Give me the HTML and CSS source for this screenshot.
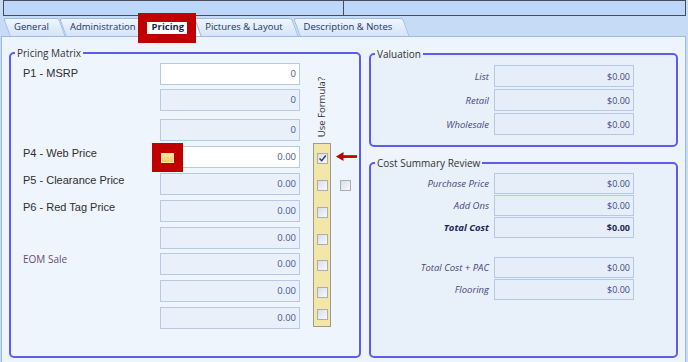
FILE: index.html
```html
<!DOCTYPE html>
<html>
<head>
<meta charset="utf-8">
<title>Pricing</title>
<link rel="stylesheet" href="styles.css">
</head>
<body>
<div class="topgrid"><div class="tg-cell"></div><div class="tg-cell"></div></div>
<div class="tabbar">
  <div class="tab">General</div>
  <div class="tab">Administration</div>
  <div class="tab active">Pricing<span class="hl-box"></span></div>
  <div class="tab">Pictures &amp; Layout</div>
  <div class="tab">Description &amp; Notes</div>
</div>
<div class="panel">
  <fieldset class="group matrix-group">
    <legend>Pricing Matrix</legend>
    <div class="matrix">
      <div class="lbl first r1">P1 - MSRP</div><div class="fld white r1">0</div>
      <div class="fld r2">0</div>
      <div class="fld r3">0</div>
      <div class="lbl r4">P4 - Web Price</div><div class="fld white r4">0.00</div>
      <div class="lbl r5">P5 - Clearance Price</div><div class="fld r5">0.00</div>
      <div class="lbl r6">P6 - Red Tag Price</div><div class="fld r6">0.00</div>
      <div class="fld r7">0.00</div>
      <div class="lbl eom r8">EOM Sale</div><div class="fld r8">0.00</div>
      <div class="fld r9">0.00</div>
      <div class="fld r10">0.00</div>

      <div class="uf">Use Formula?</div>
      <div class="strip"></div>
      <div class="cb checked r4"><svg width="9" height="9" viewBox="0 0 9 9"><path d="M1.5 4.5 L3.7 6.8 L7.8 1.5" fill="none" stroke="#2b3a78" stroke-width="1.4"/></svg></div>
      <div class="cb r5"></div>
      <div class="cb r6"></div>
      <div class="cb r7"></div>
      <div class="cb r8"></div>
      <div class="cb r9"></div>
      <div class="cb last r10"></div>
      <div class="cb extra r5"></div>

      <div class="arrow r4"><svg width="21" height="9" viewBox="0 0 21 9"><polygon points="0,4.5 7.5,0 7.5,9" fill="#c00000"/><rect x="7" y="3.2" width="14" height="2.7" fill="#c00000"/></svg></div>
      <div class="hl-icon r4"><span class="note"></span></div>
    </div>
  </fieldset>

  <div class="rightcol">
    <fieldset class="group side-group valuation">
      <legend>Valuation</legend>
      <div class="vrows">
        <div class="vlbl">List</div><div class="vfld">$0.00</div>
        <div class="vlbl">Retail</div><div class="vfld">$0.00</div>
        <div class="vlbl">Wholesale</div><div class="vfld">$0.00</div>
      </div>
    </fieldset>
    <fieldset class="group side-group cost">
      <legend>Cost Summary Review</legend>
      <div class="crows">
        <div class="vlbl">Purchase Price</div><div class="vfld">$0.00</div>
        <div class="vlbl">Add Ons</div><div class="vfld">$0.00</div>
        <div class="vlbl strong">Total Cost</div><div class="vfld strong">$0.00</div>
        <div class="spacer"></div>
        <div class="vlbl">Total Cost + PAC</div><div class="vfld">$0.00</div>
        <div class="vlbl">Flooring</div><div class="vfld">$0.00</div>
      </div>
    </fieldset>
  </div>
</div>
</body>
</html>
```
FILE: styles.css
```css
* { box-sizing: border-box; }
html, body { margin: 0; }
body {
  width: 688px;
  height: 362px;
  overflow: hidden;
  background: #c6dbf6;
  font-family: "Open Sans", "Noto Sans", sans-serif;
}

/* top grid remnant */
.topgrid {
  display: grid;
  grid-template-columns: 340px 1fr;
  height: 16px;
  margin: 0 2px 0 3px;
  border: 1px solid #4b4b55;
  background: #bdd7fa;
}
.tg-cell:first-child { border-right: 1px solid #4b4b55; }

/* tabs */
.tabbar {
  position: relative;
  z-index: 0;
  display: flex;
  height: 20px;
  padding: 2px 0 0 3px;
}
.tab {
  position: relative;
  height: 18px;
  line-height: 18px;
  padding: 0 10px 0 11px;
  font-size: 9.5px;
  color: #1b355f;
  white-space: nowrap;
}
.tab::before {
  content: "";
  position: absolute;
  inset: 0;
  z-index: -1;
  border: 1px solid #9fbce4;
  border-bottom: 0;
  border-radius: 3px 3px 0 0;
  background: linear-gradient(#eef5fd, #d5e4f7);
  transform: skewX(20deg);
  transform-origin: 0 0;
}
.tab.active {
  padding: 0 10px 0 6px;
  font-weight: 700;
  color: #15284e;
  background: #ffffff;
}
.tab.active::before { background: #ffffff; }
.hl-box {
  position: absolute;
  top: -5px;
  bottom: -7px;
  left: -8px;
  right: -2px;
  border: 9px solid #c00000;
  z-index: 2;
}

/* content panel */
.panel {
  display: flex;
  gap: 8px;
  height: 326px;
  margin: 0 2px 0 1px;
  padding: 9px 6px 0 7px;
  border: 1px solid #9dbbe2;
  border-bottom: 0;
  background: #eef4fc;
}

.group {
  margin: 0;
  min-width: 0;
  border: 2px solid #5c5cf2;
  border-radius: 5px;
  padding: 3px 0 0;
}
.group legend {
  margin-left: 4px;
  padding: 0 2px;
  font-size: 10px;
  line-height: 14px;
  color: #333333;
}

.matrix-group {
  width: 352px;
  height: 312px;
  background: #eef5fd;
}

.matrix {
  display: grid;
  margin-left: 12px;
  grid-template-columns: 137px 140px 13px 18px 8px 12px 8px;
  grid-template-rows: 26px 30px 27px 27px 27px 27px 26px 27px 27px 22px;
}
.r1 { grid-row: 1; }
.r2 { grid-row: 2; }
.r3 { grid-row: 3; }
.r4 { grid-row: 4; }
.r5 { grid-row: 5; }
.r6 { grid-row: 6; }
.r7 { grid-row: 7; }
.r8 { grid-row: 8; }
.r9 { grid-row: 9; }
.r10 { grid-row: 10; }

.lbl {
  grid-column: 1;
  align-self: start;
  padding-top: 1px;
  font-family: "Liberation Sans", Arial, sans-serif;
  font-size: 11px;
  line-height: 13px;
  color: #2e2e2e;
}
.lbl.first { padding-top: 4px; }
.lbl.eom {
  font-family: "Open Sans", sans-serif;
  font-size: 10px;
  padding-top: 0;
  color: #6b4b77;
}

.fld {
  grid-column: 2;
  align-self: start;
  height: 22px;
  line-height: 20px;
  padding-right: 3px;
  text-align: right;
  font-size: 9.5px;
  color: #4a5890;
  border: 1px solid #b6cae6;
  background: #e9f0fa;
}
.fld.white { background: #ffffff; }

.uf {
  grid-column: 4;
  grid-row: 1 / 4;
  align-self: end;
  justify-self: center;
  margin-bottom: 9px;
  writing-mode: vertical-rl;
  transform: rotate(180deg);
  font-size: 9.5px;
  line-height: 12px;
  color: #2e2e2e;
  white-space: nowrap;
}
.strip {
  grid-column: 4;
  grid-row: 4 / 11;
  margin: -3px 0 2px;
  border: 1px solid #9e9a8c;
  background: #f2e6a8;
}
.cb {
  grid-column: 4;
  align-self: start;
  justify-self: center;
  width: 11px;
  height: 11px;
  margin-top: 7px;
  border: 1px solid #a6aeba;
  background: linear-gradient(135deg, #d9dee5, #f8f9fb);
  display: flex;
  align-items: center;
  justify-content: center;
}
.cb svg { display: block; }
.cb.last { margin-top: 2px; }
.cb.extra { grid-column: 6; }

.arrow {
  grid-column: 5 / 8;
  align-self: start;
  justify-self: end;
  margin: 6px 2px 0 0;
}
.arrow svg { display: block; }

.hl-icon {
  grid-column: 1 / 3;
  align-self: start;
  justify-self: start;
  z-index: 1;
  width: 31px;
  height: 29px;
  margin: -3px 0 0 129px;
  padding: 10px 0 0 9px;
  background: #c00000;
}
.note {
  display: block;
  width: 13px;
  height: 10px;
  border: 1px solid #fbe6a6;
  background: linear-gradient(#fde7a4, #f3c865);
}

/* right column */
.rightcol {
  display: flex;
  flex-direction: column;
  gap: 9px;
  width: 309px;
  margin-top: 1px;
  height: 311px;
}
.side-group { background: #e8f0fa; }
.valuation { height: 100px; padding-top: 4px; }
.cost { flex: 1; padding-top: 3px; }

.vrows, .crows {
  display: grid;
  grid-template-columns: 118px 140px;
  column-gap: 5px;
}
.vrows { row-gap: 2px; grid-auto-rows: 22px; }
.crows { row-gap: 1px; grid-template-rows: 21px 21px 21px 17px 21px 21px; }
.spacer { grid-column: 1 / -1; }

.vlbl {
  align-self: center;
  text-align: right;
  font-style: italic;
  font-size: 9.5px;
  color: #46467a;
  white-space: nowrap;
}
.vfld {
  display: flex;
  align-items: center;
  justify-content: flex-end;
  padding-right: 3px;
  font-size: 9px;
  color: #3c4a82;
  border: 1px solid #b4c8e4;
  background: #e6eef9;
}
.strong { font-weight: 700; color: #1d2858; }
```
